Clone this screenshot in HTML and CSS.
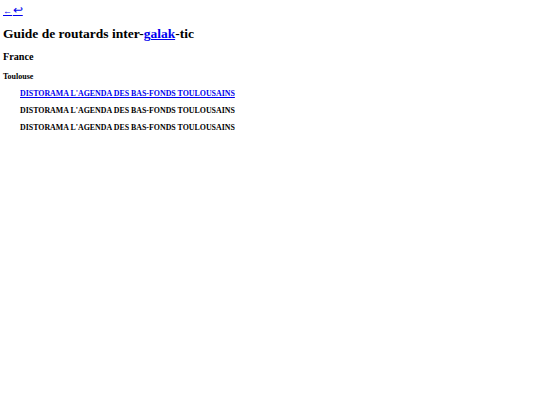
FILE: index.html
```html
<!DOCTYPE html>
<html lang="fr">
<head>
<meta charset="utf-8">
<title>Guide de routards inter-galak-tic</title>
<link rel="stylesheet" href="styles.css">
</head>
<body>
<nav class="nav"><a href="#" class="back">←</a> <a href="#" class="home">↩</a></nav>
<h1 class="title">Guide de routards inter-<a href="#">galak</a>-tic</h1>
<h2 class="country">France</h2>
<h3 class="city">Toulouse</h3>
<ul class="list">
<li class="item"><a href="#">DISTORAMA L'AGENDA DES BAS-FONDS TOULOUSAINS</a></li>
<li class="item">DISTORAMA L'AGENDA DES BAS-FONDS TOULOUSAINS</li>
<li class="item">DISTORAMA L'AGENDA DES BAS-FONDS TOULOUSAINS</li>
</ul>
</body>
</html>
```
FILE: styles.css
```css
html, body {
  background: #fff;
}
body {
  margin: 0;
  padding: 3px 3px;
  font-family: "Liberation Serif", "Times New Roman", serif;
  color: #000;
}
a {
  color: #0000ee;
}
.nav {
  font-size: 11px;
  line-height: 14px;
  word-spacing: -2px;
}
.back {
  font-size: 9px;
}
.home {
  font-size: 11.5px;
}
.title {
  font-size: 13.5px;
  line-height: 18px;
  margin: 7px 0 0;
}
.country {
  font-size: 10.2px;
  line-height: 13px;
  margin: 7px 0 0;
}
.city {
  font-size: 8px;
  line-height: 10px;
  margin: 9px 0 0;
}
.list {
  list-style: none;
  margin: 5.5px 0 0;
  padding: 0 0 0 17px;
}
.item {
  font-size: 7.9px;
  font-weight: bold;
  line-height: 11px;
  margin-bottom: 6px;
}
```
